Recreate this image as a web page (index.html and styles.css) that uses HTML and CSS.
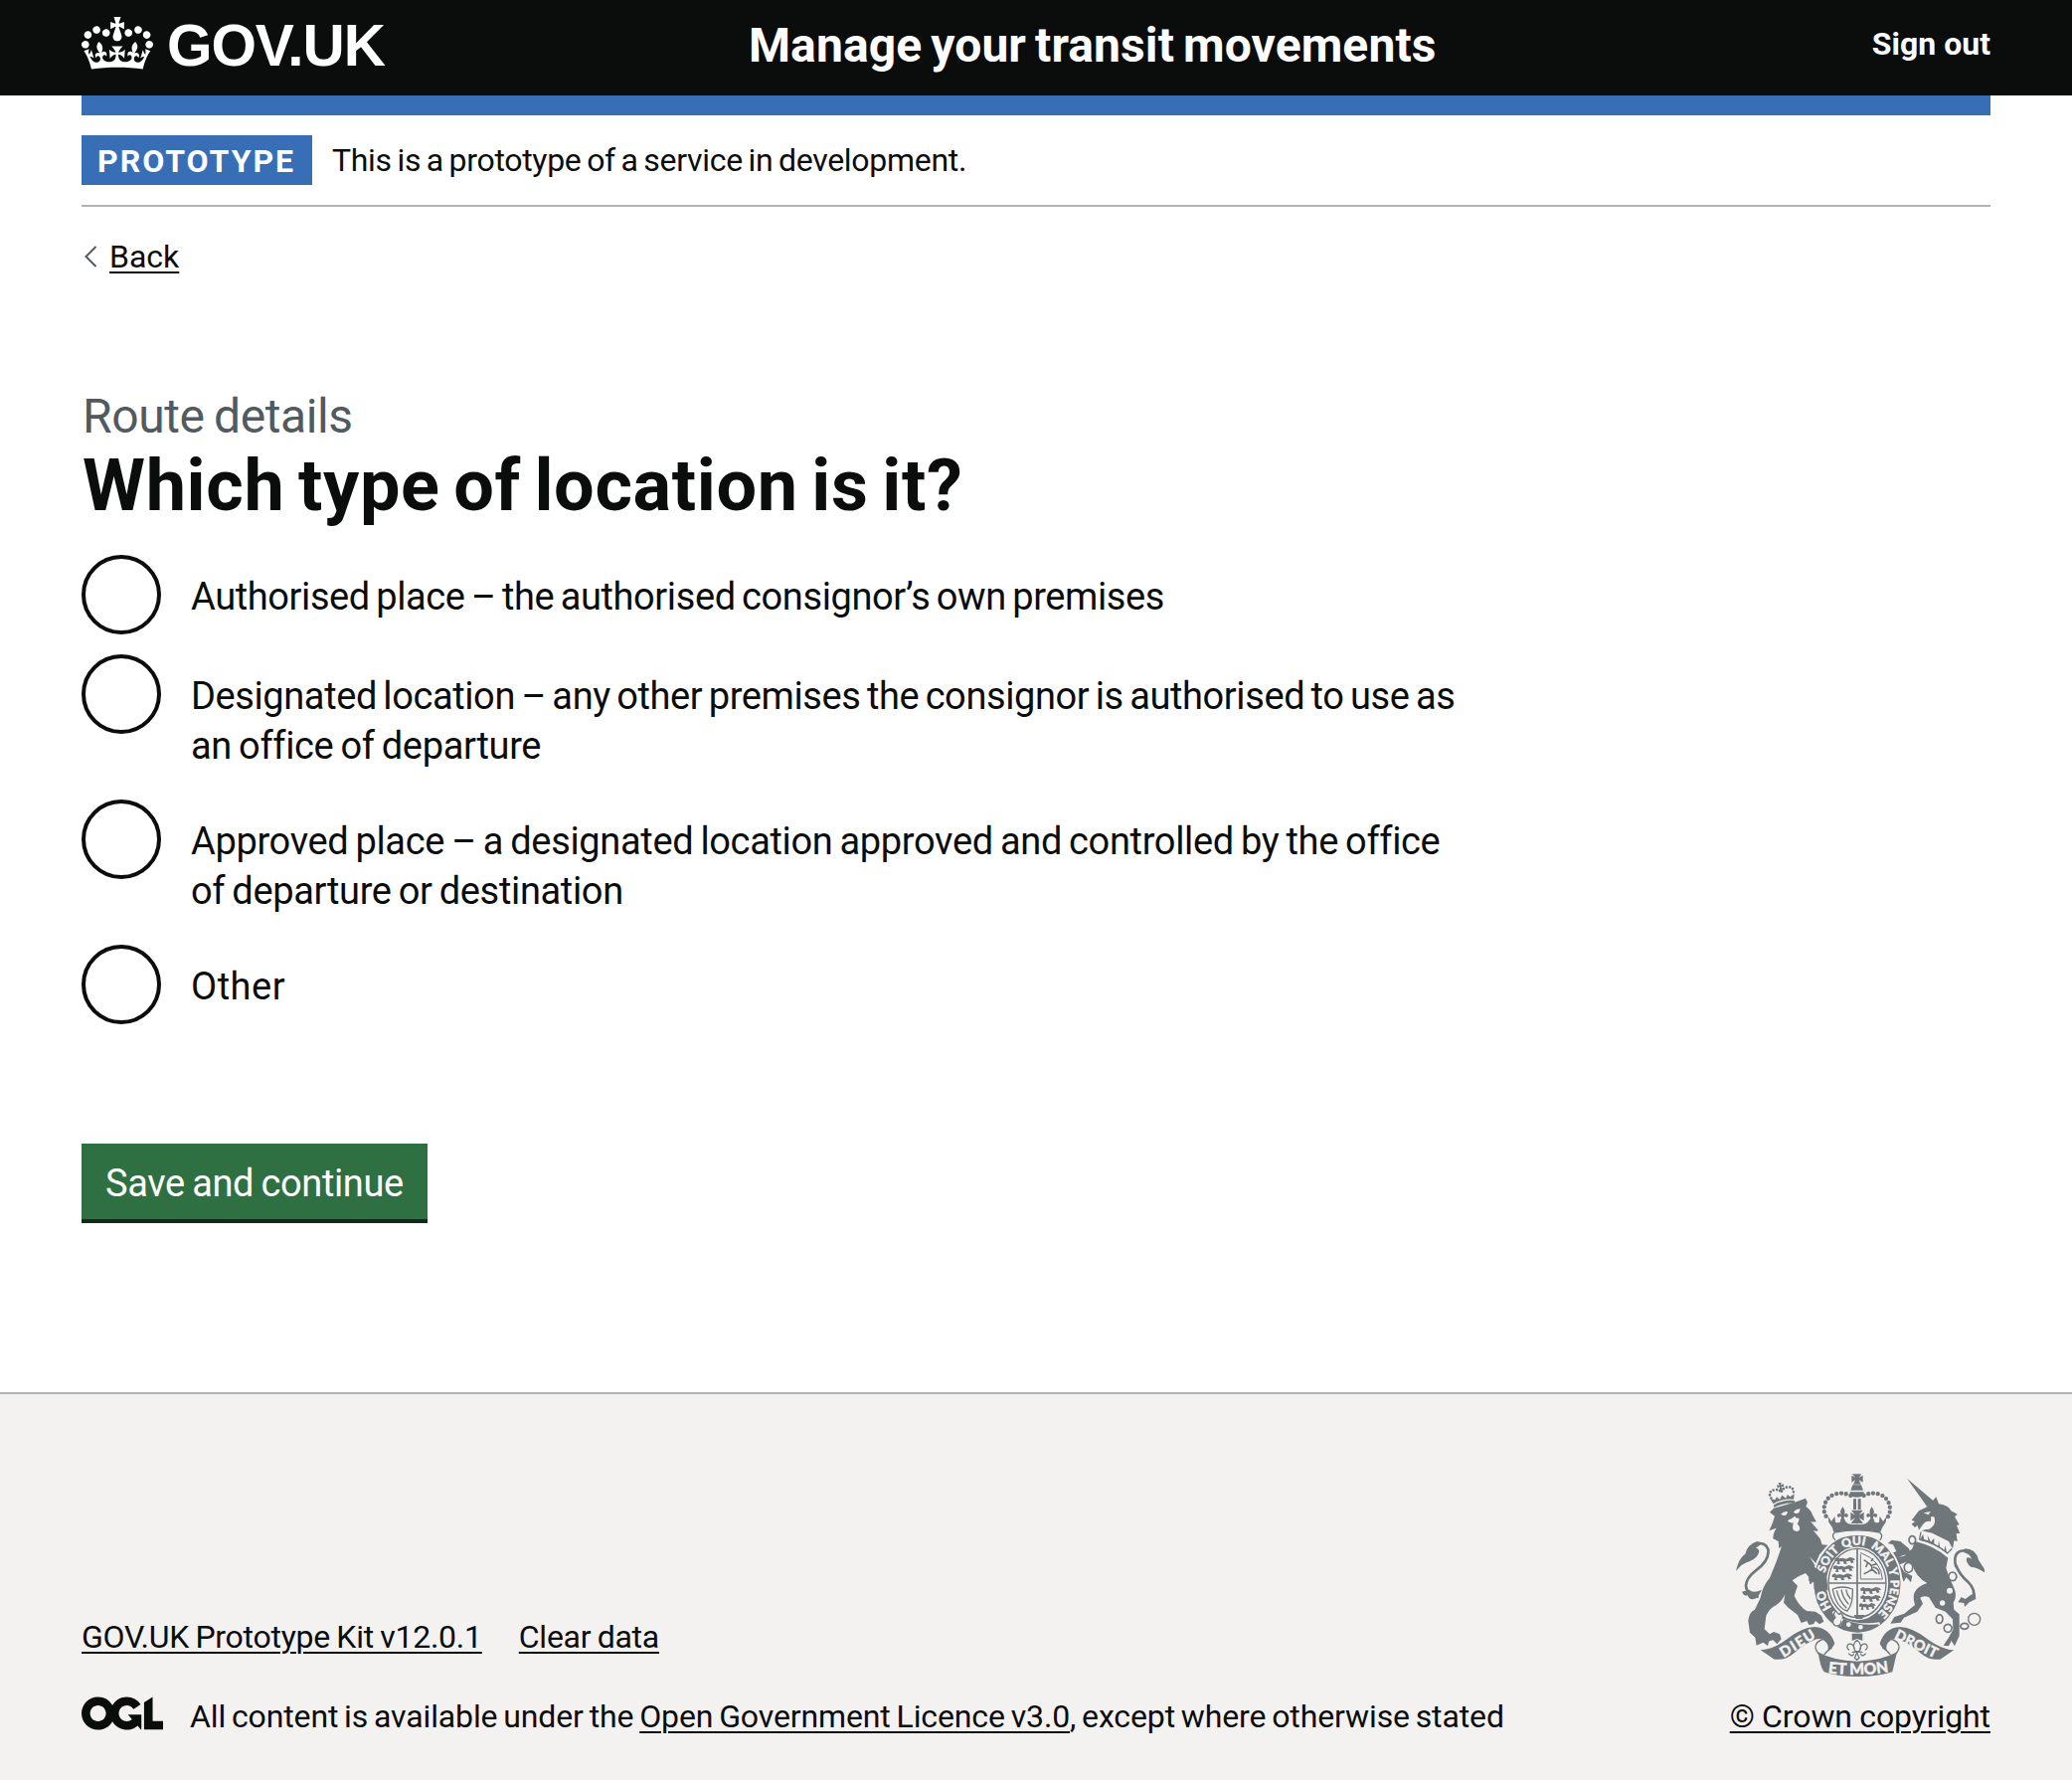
FILE: index.html
```html
<!DOCTYPE html>
<html lang="en">
<head>
<meta charset="utf-8">
<title>Which type of location is it?</title>
<link rel="stylesheet" href="styles.css">
</head>
<body>
<header class="header">
  <a class="logo" href="#">
    <svg class="logo-crown" viewBox="0 0 132 97" width="72" height="53" fill="currentColor" aria-hidden="true"><path fill-rule="evenodd" d="M25 30.2c3.5 1.5 7.7-.2 9.1-3.7 1.5-3.6-.2-7.8-3.9-9.2-3.6-1.4-7.6.3-9.1 3.9-1.4 3.5.3 7.5 3.9 9zM9 39.5c3.6 1.5 7.8-.2 9.2-3.7 1.5-3.6-.2-7.8-3.9-9.1-3.6-1.5-7.6.2-9.1 3.8-1.4 3.5.3 7.5 3.8 9zM4.4 57.2c3.5 1.5 7.7-.2 9.1-3.8 1.5-3.6-.2-7.7-3.9-9.1-3.5-1.5-7.6.3-9.1 3.8-1.4 3.5.3 7.6 3.9 9.1zm38.3-21.4c3.5 1.5 7.7-.2 9.1-3.8 1.5-3.6-.2-7.7-3.9-9.1-3.6-1.5-7.6.3-9.1 3.8-1.3 3.6.4 7.7 3.9 9.1zm64.4-5.6c-3.6 1.5-7.8-.2-9.1-3.7-1.5-3.6.2-7.8 3.8-9.2 3.6-1.4 7.7.3 9.2 3.9 1.3 3.5-.4 7.5-3.9 9zm15.9 9.3c-3.6 1.5-7.7-.2-9.1-3.7-1.5-3.6.2-7.8 3.7-9.1 3.6-1.5 7.7.2 9.2 3.8 1.5 3.5-.3 7.5-3.8 9zm4.7 17.7c-3.6 1.5-7.8-.2-9.2-3.8-1.5-3.6.2-7.7 3.9-9.1 3.6-1.5 7.7.3 9.2 3.8 1.3 3.5-.4 7.6-3.9 9.1zM89.3 35.8c-3.6 1.5-7.8-.2-9.2-3.8-1.4-3.6.2-7.7 3.9-9.1 3.6-1.5 7.7.3 9.2 3.8 1.4 3.6-.3 7.7-3.9 9.1zM69.7 17.7l8.9 4.7V9.3l-8.9 2.8c-.2-.3-.5-.6-.9-.9L72.4 0H59.6l3.5 11.2c-.3.3-.6.5-.9.9l-8.8-2.8v13.1l8.8-4.7c.3.3.6.7.9.9l-5 15.4v.1c-.2.8-.4 1.6-.4 2.4 0 4.1 3.1 7.5 7 8.1h.2c.3 0 .7.1 1 .1.4 0 .7 0 1-.1h.2c4-.6 7.1-4.1 7.1-8.1 0-.8-.1-1.7-.4-2.4V34l-5.1-15.4c.4-.2.7-.6 1-.9zM66 92.8c16.9 0 32.8 1.1 47.1 3.2 4-16.9 8.9-26.7 14-33.5l-9.6-3.4c1 4.9 1.1 7.2 0 10.2-1.5-1.4-3-4.3-4.2-8.7L108.6 76c2.8-2 5-3.2 7.5-3.3-4.4 9.4-10 11.9-13.6 11.2-4.3-.8-6.3-4.6-5.6-7.9 1-4.7 5.7-5.9 8-.5 4.3-8.7-3-11.4-7.6-8.8 7.1-7.2 7.9-13.5 2.1-21.1-8 6.1-8.1 12.3-4.5 20.8-4.7-5.4-12.1-2.5-9.5 6.2 3.4-5.2 7.9-2 7.2 3.1-.6 4.3-6.4 7.8-13.5 7.2-10.3-.9-10.9-8-11.2-13.8 2.5-.5 7.1 1.8 11 7.3L80.2 60c-4.1 4.4-8 5.3-12.3 5.4 1.4-4.4 8-11.6 8-11.6H55.5s6.4 7.2 7.9 11.6c-4.2-.1-8-1-12.3-5.4l1.4 16.4c3.9-5.5 8.5-7.7 10.9-7.3-.3 5.8-.9 12.8-11.1 13.8-7.2.6-12.9-2.9-13.5-7.2-.7-5 3.8-8.3 7.1-3.1 2.7-8.7-4.6-11.6-9.4-6.2 3.7-8.5 3.6-14.7-4.6-20.8-5.8 7.6-5 13.9 2.2 21.1-4.7-2.6-11.9.1-7.7 8.8 2.3-5.5 7.1-4.2 8.1.5.7 3.3-1.3 7.1-5.7 7.9-3.5.7-9-1.8-13.5-11.2 2.5.1 4.7 1.3 7.5 3.3l-4.7-15.4c-1.2 4.4-2.7 7.2-4.3 8.7-1.1-3-.9-5.3 0-10.2l-9.5 3.4c5 6.9 9.9 16.7 14 33.5 14.8-2.1 30.8-3.2 47.7-3.2z"/></svg>
    <span class="logo-text">GOV.UK</span>
  </a>
  <a class="service-name" href="#">Manage your transit movements</a>
  <a class="sign-out" href="#">Sign out</a>
</header>

<div class="page">
  <div class="blue-bar"></div>
  <div class="phase">
    <strong class="tag">PROTOTYPE</strong>
    <span class="phase-text">This is a prototype of a service in development.</span>
  </div>
  <a class="back" href="#">
    <svg class="back-icon" viewBox="0 0 14 22" width="14" height="22" aria-hidden="true"><path d="M12.5 1L2.5 11l10 10" fill="none" stroke="#505a5f" stroke-width="2"/></svg>
    <span class="back-text">Back</span>
  </a>

  <main class="main">
    <span class="caption">Route details</span>
    <h1 class="heading">Which type of location is it?</h1>
    <div class="radios">
      <div class="radio"><span class="circle"></span><span class="label tight">Authorised place – the authorised consignor’s own premises</span></div>
      <div class="radio"><span class="circle"></span><span class="label"><span class="tight">Designated location – any other premises the consignor is authorised to use as</span><br>an office of departure</span></div>
      <div class="radio"><span class="circle"></span><span class="label">Approved place – a designated location approved and controlled by the office<br>of departure or destination</span></div>
      <div class="radio"><span class="circle"></span><span class="label wide">Other</span></div>
    </div>
    <button class="button">Save and continue</button>
  </main>
</div>

<footer class="footer">
  <div class="meta">
    <div class="links"><a class="kit" href="#">GOV.UK Prototype Kit v12.0.1</a><a class="clear" href="#">Clear data</a></div>
    <div class="licence">
      <svg class="ogl" viewBox="0 0 483.2 195.7" width="82" height="34" fill="currentColor" aria-hidden="true"><path d="M421.5 142.8V.1l-50.7 32.3v161.1h112.4v-50.7zm-122.3-9.6A47.12 47.12 0 0 1 221 97.8c0-26 21.1-47.1 47.1-47.1 16.7 0 31.4 8.7 39.7 21.8l42.7-27.2A97.63 97.63 0 0 0 268.1 0c-36.5 0-68.3 20.1-85.1 49.7A98 98 0 0 0 97.8 0C43.9 0 0 43.9 0 97.8s43.9 97.8 97.8 97.8c36.5 0 68.3-20.1 85.1-49.7a97.76 97.76 0 0 0 149.6 25.4l19.4 22.2h3v-87.8h-80l24.3 27.5zM97.8 145c-26 0-47.1-21.1-47.1-47.1s21.1-47.1 47.1-47.1 47.1 21.1 47.1 47.1S123.8 145 97.8 145"/></svg>
      <span class="licence-text">All content is available under the <a href="#">Open Government Licence v3.0</a>, except where otherwise stated</span>
    </div>
  </div>
  <div class="crown">
    <svg class="crest" viewBox="48 36 750 612" width="250" height="204" aria-hidden="true">
      <defs>
        <path id="garter" d="M414 482A100 115 0 0 1 414 251A100 115 0 0 1 414 482"/>
        <path id="motto" d="M322 636Q415 650 520 632"/>
        <g id="fleur"><path d="M0-22Q11-8 4 2Q12-6 16 2Q18 10 10 10L8 6Q4 6 4 12L8 20H-8L-4 12Q-4 6-8 6L-10 10Q-18 10-16 2Q-12-6-4 2Q-11-8 0-22Z"/></g>
        <g id="beast"><path d="M0 6L8 2L14 6L24 4L34 7L46 2L58 5L62 11L54 10L58 18L50 20L46 13L34 15L38 22L28 22L26 15L14 15L16 23L6 22L9 14L0 13Z"/></g>
      </defs>

      <!-- lion -->
      <path d="M150 152L162 140L178 136L232 120L258 110L264 122L259 135Q274 145 280 162L290 180Q282 183 273 180L297 208Q290 211 281 207L302 232L308 250L330 252L300 280L292 300L330 340L325 395L312 378L303 392L294 376L284 386L283 364L271 370L268 348L258 336Q236 344 218 358L234 374Q228 390 224 405Q240 438 262 450L288 452L306 464L313 482L300 490L288 480L282 490L268 492L262 480L245 486L234 462L206 440L192 425L196 400Q188 420 170 432Q148 442 139 465L134 505L150 520L162 513L180 520L185 535L172 550L160 538L148 541L144 555L130 545L110 554L106 530L90 515L85 480Q88 452 105 446L122 410Q128 375 150 350Q172 300 186 255L178 262L176 240L160 232Q160 214 170 200L148 208Q156 192 160 180L165 164Z"/>
      <path class="p" d="M183 158Q192 148 204 150Q202 164 192 162ZM222 152Q230 142 242 142L239 152Q230 160 222 152ZM203 178Q215 172 226 164Q228 172 238 170Q240 180 233 187Q245 200 238 208Q228 214 220 204Q218 190 222 184Q210 186 203 178Z"/>
      <path class="p" d="M270 286L292 322L318 352L300 318Z"/>
      <g transform="rotate(-12 190 110)">
        <path d="M158 132Q190 122 222 132V124Q190 114 158 124ZM158 120L152 104L166 110L172 102L180 112L189 100L198 112L206 102L212 110L226 104L221 120Q190 110 158 120Z"/>
        <path class="dots small" d="M155 102Q148 80 170 80Q184 80 189 92Q194 80 208 80Q230 80 224 102"/>
        <path d="M185 62H195L192 70L200 67V77L192 74L195 86H184L188 74L180 77V67L188 70Z"/>
      </g>
      <path class="l t10" d="M116 408Q80 402 78 374Q79 350 108 328Q150 298 145 264Q138 244 112 246"/>
      <path d="M112 240Q82 250 76 278Q56 290 48 330Q66 306 90 300Q118 288 118 268Q116 260 108 260L124 248ZM66 392Q74 408 82 402Q92 424 114 408L126 386Q100 398 88 386Z"/>

      <!-- unicorn -->
      <path d="M564 50L649 122L624 134ZM578 176L600 148L622 137L638 122L652 106L660 127Q690 132 697 148L716 158L708 166L722 190L714 192L724 216L713 216L716 240L706 238L702 264L690 240L640 215L608 208L622 204Q640 192 636 180Q620 176 610 192L600 206L596 192L588 198L578 188L588 180Z"/>
      <path class="p" d="M614 154L636 150L628 160ZM636 166Q640 190 618 204L632 203Q654 190 646 166Z"/>
      <path class="p" d="M604 208Q664 222 704 262L690 286Q650 250 598 238Z"/>
      <path class="l t4" d="M606 212L602 234Q652 246 686 276L700 262"/>
      <path d="M612 218L616 234L628 238L626 222L636 242L646 230L646 248L658 256L660 238L664 260L676 268L680 252L684 275Q654 246 603 236Z"/>
      <path d="M588 240Q648 254 688 290L682 320Q690 350 704 376Q718 404 704 425L706 446L722 460L722 525L708 556L698 540L690 556L674 554L690 530L703 506L702 475L680 452L650 440L630 408Q612 402 604 410L612 428L595 452L555 470L545 485L514 488L526 468L556 458L588 432Q578 402 592 386Q604 372 625 366Q590 348 580 310L562 302L542 310L556 332L580 344L576 364L562 348L554 362L548 344L536 338L522 298L534 288L556 284L580 262Z"/>
      <path d="M576 278L552 282L530 292L510 280L532 270L522 250L506 246L518 236L544 240L570 262ZM520 300L540 340L526 332L514 316Z"/>
      <path class="l t10" d="M712 318Q700 270 735 268Q756 266 768 282M712 312Q722 340 748 362Q772 386 764 412"/>
      <path d="M738 262Q772 262 780 296L798 324V334Q774 318 758 318Q740 304 744 290Q752 286 760 294Q752 276 736 274ZM770 396L772 414L752 424L738 438L736 426L718 424L728 408L740 414L756 402Z"/>
      <circle class="p" cx="568" cy="319" r="11"/><circle class="p" cx="702" cy="346" r="11"/>
      <path class="l t6" d="M568 304a13 15 0 1 0 1 0ZM701 333a12 13 0 1 0 1 0ZM578 224a10 12 0 1 0 4 0ZM661 461a10 13 0 1 0 2 0ZM687 490a12 12 0 1 0 1 0ZM737 487a12 9 0 1 0 1 0Z"/>
      <circle class="l t4" cx="767" cy="475" r="18"/>
      <circle class="p" cx="693" cy="389" r="9"/><circle class="p" cx="671" cy="426" r="8"/>

      <!-- royal crown -->
      <path d="M399 37H427L419 47L431 41V62L419 55L425 68H402L408 55L397 62V41L408 47ZM400 70H426L432 86H394ZM392 91H434V99Q430 107 413 107Q396 107 392 99ZM402 112H411V144H402ZM416 112H425V144H416ZM396 146H431L419 161L434 152V178L419 169L432 186H395L408 169L394 178V152L408 161Z"/>
      <path class="dots" d="M394 102Q370 90 345 98Q312 112 314 148Q316 162 326 172M434 102Q456 90 482 98Q514 112 513 148Q511 162 502 172"/>
      <use href="#fleur" transform="translate(370 158)"/><use href="#fleur" transform="translate(458 158)"/>
      <path d="M326 164L336 180L346 164L348 182Q360 188 366 176H376Q384 192 413 188Q442 192 450 176H462Q470 188 480 182L482 164L492 180L503 164L500 182Q488 198 484 212Q413 200 343 212Q340 196 328 182Z"/>

      <!-- garter and shield -->
      <ellipse class="p" cx="414" cy="366" rx="136" ry="152"/>
      <ellipse class="band" cx="414" cy="367" rx="112" ry="129"/>
      <path class="p" d="M346 213Q413 200 482 213Q494 224 482 236Q414 208 348 236Q334 224 346 213Z"/>
      <path class="l t4" d="M346 213Q413 200 482 213Q494 224 482 236M348 236Q334 224 346 213"/>
      <ellipse class="l t4" cx="414" cy="366" rx="87" ry="104"/>
      <path class="l t6" d="M414 264V462M328 366H500"/>
      <use href="#beast" transform="translate(346 286)"/><use href="#beast" transform="translate(342 310)"/><use href="#beast" transform="translate(338 335)"/>
      <use href="#beast" transform="translate(424 376)"/><use href="#beast" transform="translate(424 400)"/><use href="#beast" transform="translate(420 424) scale(.8 1)"/>
      <path class="l t3" d="M424 278V354H490Q488 300 424 274"/>
      <path class="l t6" d="M434 296L446 304L440 318M446 304Q462 314 458 324Q450 332 434 338M458 324L474 338M458 312L474 308M456 300L462 292M462 318Q482 322 480 340"/>
      <path class="l t4" d="M340 384Q368 372 400 384Q402 430 384 450Q350 440 340 384M352 388Q358 418 382 442M366 386Q370 410 388 430M380 386Q382 400 394 414"/>
      <path d="M404 462H438L428 474H410Z"/>
      <g class="letters ring">
        <text><textPath href="#garter" startOffset="13.5%">HO</textPath></text>
        <text><textPath href="#garter" startOffset="29.5%">SOIT</textPath></text>
        <text><textPath href="#garter" startOffset="43.5%">QUI</textPath></text>
        <text><textPath href="#garter" startOffset="56%">MAL</textPath></text>
        <text><textPath href="#garter" startOffset="68.5%">Y</textPath></text>
        <text><textPath href="#garter" startOffset="73.5%">PENSE</textPath></text>
      </g>
      <path d="M268 310Q296 318 322 352L326 390L314 376L304 392L294 376L284 386L283 364L268 360Z"/>
      <path class="p" d="M338 452L356 448L372 462L370 492L350 498L338 488L346 472Z"/>
      <path class="l t4" d="M350 450Q338 458 348 470Q334 480 346 494Q366 498 366 480Q376 466 364 456Q360 466 350 450"/>
      <path class="p edge" d="M366 476Q420 498 482 488"/>
      <path d="M372 474Q420 496 480 490Q450 516 410 514Q380 508 364 494Z"/>
      <circle class="p" cx="388" cy="491" r="7"/><circle class="p" cx="424" cy="499" r="7"/>

      <!-- ribbon -->
      <path d="M122 568Q160 566 200 536Q245 500 285 498Q330 500 346 548Q340 562 324 570Q332 552 312 538Q300 530 284 538Q250 552 222 578Q196 600 164 596Z"/>
      <path d="M706 568Q668 566 628 536Q583 500 543 498Q498 500 482 548Q488 562 504 570Q496 552 516 538Q528 530 544 538Q578 552 606 578Q632 600 664 596Z"/>
      <path class="l t4" d="M314 534Q286 542 288 562Q294 580 306 586M514 534Q542 542 540 562Q534 580 522 586M314 582Q324 570 338 560M514 582Q504 570 490 560"/>
      <path d="M296 574Q340 600 414 602Q488 600 534 574L520 634Q480 648 414 648Q350 648 314 634Q302 620 296 574Z"/>
      <path class="l t4" d="M413 538Q396 552 408 572H420Q432 552 413 538M406 564Q400 546 388 550Q378 560 390 568M422 564Q428 546 440 550Q450 560 438 568M398 574H430M404 578Q400 592 388 578M424 578Q428 592 440 578M413 576L406 592L413 598L420 592Z"/>
      <path d="M398 518H430V540L414 534L398 540Z"/>
      <g class="letters">
        <text transform="translate(192 591) rotate(-32)" textLength="116">DIEU</text>
        <text transform="translate(524 532) rotate(26)" textLength="138">DROIT</text>
        <text class="mon"><textPath href="#motto" startOffset="2%">ET MON</textPath></text>
      </g>
    </svg>
    <a class="copyright" href="#">© Crown copyright</a>
  </div>
</footer>
</body>
</html>
```
FILE: styles.css
```css
* { box-sizing: border-box; }
body { margin: 0; background: #fff; color: #0b0c0c; font: 32px/40px Roboto, Arial, sans-serif; }
a { color: inherit; text-underline-offset: 4px; text-decoration-thickness: 2px; }

.header { display: grid; grid-template-columns: 671px 1fr auto; height: 96px; padding: 0 82px; background: #0b0c0c; color: #fff; align-items: start; }
.header a { text-decoration: none; }
.logo { display: flex; padding-top: 17px; }
.logo-text { margin-left: 14px; padding-top: 2px; font: bold 58.5px/53px "Liberation Sans", Arial, sans-serif; letter-spacing: -1.1px; }
.service-name { padding-top: 22px; font-size: 48px; line-height: 48px; font-weight: 700; letter-spacing: .1px; word-spacing: -3px; }
.sign-out { padding-top: 24px; font-weight: 700; }

.page { margin: 0 82px; }
.blue-bar { height: 20px; background: #386eb5; }
.phase { display: flex; gap: 20px; padding: 20px 0; border-bottom: 2px solid #b1b4b6; line-height: 50px; }
.phase-text { letter-spacing: -.3px; word-spacing: -2px; }
.tag { width: 232px; height: 50px; padding-left: 16px; background: #386eb5; color: #fff; letter-spacing: 2px; line-height: 52px; }
.back { display: flex; width: max-content; margin-top: 30px; text-decoration: none; }
.back-icon { margin: 9px 12px 0 2px; }
.back-text { text-decoration: underline 2px; text-underline-offset: 4px; }

.main { margin-top: 111px; }
.caption { display: block; padding-left: 1px; color: #505a5f; font-size: 48px; line-height: 60px; letter-spacing: -.4px; word-spacing: -2px; }
.heading { margin: 0 0 29px; padding-left: 1px; font-size: 72px; line-height: 80px; font-weight: 700; letter-spacing: .65px; word-spacing: -5px; }
.radios { display: flex; flex-direction: column; gap: 20px; }
.radio { display: flex; min-height: 80px; font-size: 38px; line-height: 50px; letter-spacing: -.34px; word-spacing: -2px; }
.circle { flex: none; width: 80px; height: 80px; border: 4px solid #0b0c0c; border-radius: 50%; background: #fff; }
.label { padding: 17px 30px 9px; white-space: nowrap; }
.tight { letter-spacing: -.4px; word-spacing: -2.6px; }
.wide { letter-spacing: .5px; }
.button { display: block; width: 348px; height: 80px; margin: 120px 0 0; padding: 15px 24px 11px; border: 0; border-bottom: 4px solid #102a1b; background: #2f7042; color: #fff; font: 38px/50px Roboto, Arial, sans-serif; letter-spacing: -.4px; word-spacing: -1.5px; white-space: nowrap; text-align: left; }

.footer { display: flex; justify-content: space-between; align-items: flex-end; margin-top: 170px; padding: 80px 82px 44px; border-top: 2px solid #b1b4b6; background: #f3f2f1; }
.links { display: flex; gap: 37px; margin-bottom: 40px; letter-spacing: -.25px; word-spacing: -1.4px; }
.licence { display: flex; gap: 27px; letter-spacing: -.12px; word-spacing: -2px; }
.crown { display: flex; flex-direction: column; align-items: flex-end; }
.copyright { letter-spacing: -.1px; word-spacing: -.5px; }

.crest { margin: 0 6px 20px 0; fill: #6f777b; }
.crest .p { fill: #f3f2f1; }
.crest .l { fill: none; stroke: #6f777b; stroke-linejoin: round; }
.crest .t3 { stroke-width: 3; }
.crest .t4 { stroke-width: 4; }
.crest .t6 { stroke-width: 5; }
.crest .t10 { stroke-width: 8; }
.crest .dots { fill: none; stroke: #6f777b; stroke-width: 13; stroke-linecap: round; stroke-dasharray: 0 14.5; }
.crest .small { stroke-width: 8; stroke-dasharray: 0 10; }
.crest .band { fill: none; stroke: #6f777b; stroke-width: 37; }
.crest .edge { fill: none; stroke: #f3f2f1; stroke-width: 8; }
.crest .letters { fill: #f3f2f1; stroke: #f3f2f1; stroke-width: 1.2; font: 900 43px/1 Lato, sans-serif; letter-spacing: 0; word-spacing: 0; }
.crest .mon { font-size: 47px; }
.crest .ring { font-size: 36px; }
```
